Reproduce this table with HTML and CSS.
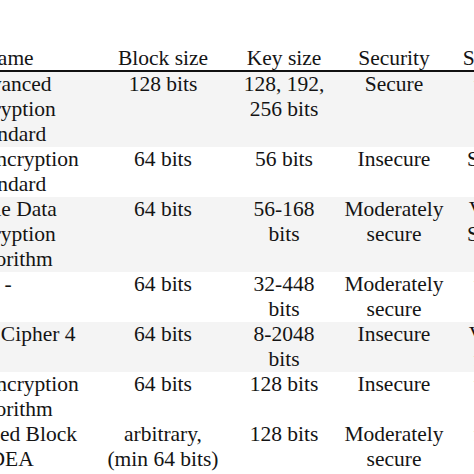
FILE: index.html
```html
<!DOCTYPE html>
<html>
<head>
<meta charset="utf-8">
<link rel="stylesheet" href="styles.css">
</head>
<body>
<table class="cipher-table">
  <colgroup>
    <col class="c-name">
    <col class="c-block">
    <col class="c-key">
    <col class="c-sec">
    <col class="c-speed">
  </colgroup>
  <thead>
    <tr>
      <th>Name</th>
      <th>Block size</th>
      <th>Key size</th>
      <th>Security</th>
      <th>Speed</th>
    </tr>
  </thead>
  <tbody>
    <tr class="shade">
      <td>Advanced<br>Encryption<br>Standard</td>
      <td>128 bits</td>
      <td>128, 192,<br>256 bits</td>
      <td>Secure</td>
      <td>fast</td>
    </tr>
    <tr>
      <td>Data Encryption<br>Standard</td>
      <td>64 bits</td>
      <td>56 bits</td>
      <td>Insecure</td>
      <td>Slow</td>
    </tr>
    <tr class="shade">
      <td>Triple Data<br>Encryption<br>Algorithm</td>
      <td>64 bits</td>
      <td>56-168<br>bits</td>
      <td>Moderately<br>secure</td>
      <td>Very<br>Slow</td>
    </tr>
    <tr>
      <td>-</td>
      <td>64 bits</td>
      <td>32-448<br>bits</td>
      <td>Moderately<br>secure</td>
      <td>fast</td>
    </tr>
    <tr class="shade">
      <td>Rivest Cipher 4</td>
      <td>64 bits</td>
      <td>8-2048<br>bits</td>
      <td>Insecure</td>
      <td>Very<br>fast</td>
    </tr>
    <tr>
      <td>Data Encryption<br>Algorithm</td>
      <td>64 bits</td>
      <td>128 bits</td>
      <td>Insecure</td>
      <td>fast</td>
    </tr>
    <tr>
      <td>Extended Block<br>IDEA</td>
      <td>arbitrary,<br>(min 64 bits)</td>
      <td>128 bits</td>
      <td>Moderately<br>secure</td>
      <td>fast</td>
    </tr>
  </tbody>
</table>
</body>
</html>
```

FILE: styles.css
```css
html, body {
  margin: 0;
  padding: 0;
  background: #ffffff;
  overflow: hidden;
  width: 474px;
  height: 474px;
}

.cipher-table {
  margin-top: 46px;
  margin-left: -76px;
  border-collapse: separate;
  border-spacing: 0;
  table-layout: fixed;
  width: 600px;
  font-family: "Liberation Serif", "Times New Roman", serif;
  font-size: 21.5px;
  color: #141414;
}

.c-name { width: 168px; }
.c-block { width: 142px; }
.c-key { width: 100px; }
.c-sec { width: 120px; }
.c-speed { width: 70px; }

.cipher-table th {
  font-weight: normal;
  line-height: 24px;
  padding: 0;
  text-align: center;
  white-space: nowrap;
  border-bottom: 2px solid #111111;
}

.cipher-table td {
  line-height: 25px;
  padding: 0;
  text-align: center;
  vertical-align: top;
  white-space: nowrap;
}

.cipher-table tr.shade td {
  background: #f4f4f4;
}
```
